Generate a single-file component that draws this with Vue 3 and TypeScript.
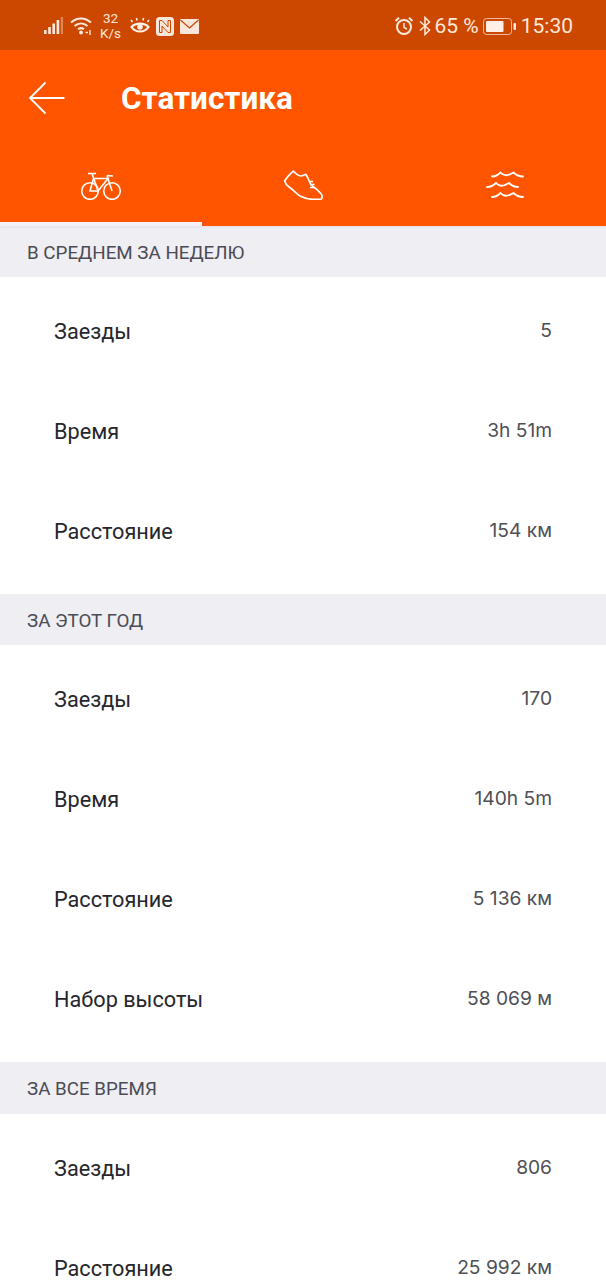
<script setup lang="ts">
interface Row { label: string; value: string }
interface Section { title: string; rows: Row[] }
const sections: Section[] = [
  { title: 'В СРЕДНЕМ ЗА НЕДЕЛЮ', rows: [
    { label: 'Заезды', value: '5' },
    { label: 'Время', value: '3h 51m' },
    { label: 'Расстояние', value: '154 км' },
  ] },
  { title: 'ЗА ЭТОТ ГОД', rows: [
    { label: 'Заезды', value: '170' },
    { label: 'Время', value: '140h 5m' },
    { label: 'Расстояние', value: '5 136 км' },
    { label: 'Набор высоты', value: '58 069 м' },
  ] },
  { title: 'ЗА ВСЕ ВРЕМЯ', rows: [
    { label: 'Заезды', value: '806' },
    { label: 'Расстояние', value: '25 992 км' },
  ] },
]
</script>

<template>
  <div class="page">
    <div class="status">
      <div class="status-left">
        <svg width="20" height="18" viewBox="0 0 20 18" class="signal">
          <rect x="0" y="13" width="2.6" height="4" fill="#ffe9dc" />
          <rect x="4.2" y="10" width="2.6" height="7" fill="#ffe9dc" />
          <rect x="8.4" y="6.5" width="2.6" height="10.5" fill="#ffe9dc" />
          <rect x="12.6" y="3" width="2.6" height="14" fill="#ffe9dc" />
          <rect x="16.8" y="0" width="2.2" height="17" fill="#ffe9dc" opacity="0.4" />
        </svg>
        <svg width="24" height="20" viewBox="0 0 24 20" class="wifi" fill="none" stroke="#ffe9dc" stroke-width="2">
          <path d="M1 6.5C7 1 15 1 21 6.5" />
          <path d="M4.5 10C8.5 6.5 13.5 6.5 17.5 10" />
          <path d="M8 13.3C10 11.7 12 11.7 14 13.3" />
          <circle cx="11" cy="16.5" r="2" fill="#ffe9dc" stroke="none" />
          <path d="M15.500 16.500h2.500M20 14v5" stroke-width="1.4" />
        </svg>
        <div class="speed"><span>32</span><span>K/s</span></div>
        <svg width="20" height="18" viewBox="0 0 20 18" class="eye" fill="none" stroke="#fff0e6" stroke-width="2.200">
          <path d="M1.500 10C5.500 5.500 14.500 5.500 18.500 10C14.500 16 5.500 16 1.500 10Z" />
          <circle cx="10" cy="10" r="2.800" fill="#fff0e6" stroke="none" />
          <path d="M2.500 5L1 3M7 3.500L6.500 1M13 3.500L13.500 1M17.500 5L19 3" stroke-width="1.600" />
        </svg>
        <svg width="18" height="19" viewBox="0 0 18 19" class="nfc">
          <rect x="0" y="0" width="18" height="19" rx="3.500" fill="#fbe6db" />
          <path d="M3.500 3.500H6L12 10V3.500H14.500V15.500H12L6 9V15.500H3.500Z" fill="none" stroke="#cc4700" stroke-width="1" />
        </svg>
        <svg width="19" height="15" viewBox="0 0 19 15" class="mail">
          <rect width="19" height="15" rx="1" fill="#fbe6db" />
          <path d="M0.500 1L9.500 9L18.500 1" fill="none" stroke="#cc4700" stroke-width="1.200" />
        </svg>
      </div>
      <div class="status-right">
        <svg width="20" height="20" viewBox="0 0 20 20" fill="none" stroke="#ffe9dc" stroke-width="2">
          <circle cx="10" cy="11" r="7" />
          <path d="M10 7v4.500l3 1.500" stroke-width="1.500" />
          <path d="M1.500 5L5 1.800M18.500 5L15 1.800" />
        </svg>
        <svg width="12" height="20" viewBox="0 0 12 20" class="bt" fill="none" stroke="#ffe9dc" stroke-width="1.500">
          <path d="M1 5.500L10.500 14L6 18.500V1.500L10.500 6L1 14.500" />
        </svg>
        <span class="pct">65 %</span>
        <svg width="33" height="17" viewBox="0 0 33 17" class="batt">
          <rect x="0.500" y="0.500" width="28" height="16" rx="3" fill="none" stroke="#ffe9dc" stroke-opacity="0.7" />
          <rect x="3" y="3" width="17.500" height="11" rx="1" fill="#fff0e6" />
          <rect x="30.500" y="5" width="2.500" height="7" rx="1" fill="#ffe9dc" />
        </svg>
        <span class="time">15:30</span>
      </div>
    </div>

    <header class="appbar">
      <div class="titlebar">
        <svg class="back" width="38" height="34" viewBox="0 0 38 34" fill="none" stroke="#fff" stroke-width="1.800">
          <path d="M36.500 17H2M17.500 1.500L2 17L17.500 32.500" />
        </svg>
        <h1 class="title">Статистика</h1>
      </div>
      <nav class="tabs">
        <div class="tab active">
          <svg width="42" height="30" viewBox="0 0 42 30" fill="none" stroke="#fff" stroke-width="1.600">
            <circle cx="10" cy="21" r="8.300" />
            <circle cx="32" cy="21" r="8.300" />
            <path d="M8 3.500H16M12 3.500L18 21H10L13.500 8.500H28L18 21M27 5.500L32 21M27 5.500L33 6" />
          </svg>
        </div>
        <div class="tab">
          <svg width="40" height="30" viewBox="0 0 40 30" fill="none" stroke="#fff" stroke-width="1.700" stroke-linejoin="round">
            <path d="M10.300 1C7 4.500 3.500 7.500 1.700 11C3 15.500 5 16 7 17.700C10.500 20 13.500 24 17 26C22 28.500 26 29.300 30.300 29.300C34 29.300 38.500 29.500 38.700 28.700C39.700 26 39.500 24.500 33.700 19.300C30.500 17 27 14.500 27 12.700C25.500 9 24.500 7 23 4.300L18.700 6C16.500 6.200 13 4 10.300 1Z" />
            <path d="M26 11.500H30M27 14.500H31.500M27 17.500H31" stroke-width="1.400" />
          </svg>
        </div>
        <div class="tab">
          <svg width="38" height="30" viewBox="0 0 38 30" fill="none" stroke="#fff" stroke-width="1.800" stroke-linecap="round">
            <path d="M6 6.500C10 6.500 12 5 14.500 2.500C17 5.500 20 5.500 22 5C24 4.500 25.500 3.500 27.500 2.500C30 5 33 6.500 37 6.500" />
            <path d="M1 17C5 17 7.500 15.500 10 13C12.500 16 15.500 16 17.500 15.500C19.500 15 21 14 23 13C25.500 15.500 28.500 17 32 17" />
            <path d="M6 27C10 27 12 25.500 14.500 23C17 26 20 26 22 25.500C24 25 25.500 24 27.500 23C30 25.500 33 27 37 27" />
          </svg>
        </div>
      </nav>
    </header>

    <main>
      <section v-for="section in sections" :key="section.title">
        <h2 class="section-title">{{ section.title }}</h2>
        <div class="rows">
          <div v-for="row in section.rows" :key="row.label" class="row">
            <span class="label">{{ row.label }}</span>
            <span class="value">{{ row.value }}</span>
          </div>
        </div>
      </section>
    </main>
  </div>
</template>

<style>
html, body { margin: 0; background: #fff; }
</style>

<style scoped>
.page {
  width: 606px;
  height: 1280px;
  overflow: hidden;
  background: #fff;
  font-family: Roboto, "Liberation Sans", sans-serif;
}
.status {
  box-sizing: border-box;
  height: 50px;
  background: #cc4700;
  color: #ffe9dc;
  display: flex;
  justify-content: space-between;
  align-items: center;
  padding: 2px 33px 0 44px;
}
.status-left, .status-right { display: flex; align-items: center; }
.wifi { margin-left: 6px; }
.speed {
  display: flex;
  flex-direction: column;
  align-items: center;
  margin-left: 6px;
  font-size: 13.500px;
  line-height: 15px;
}
.eye { margin-left: 9px; }
.nfc { margin-left: 6px; }
.mail { margin-left: 6px; margin-top: 1px; }
.bt { margin-left: 5px; }
.pct { font-size: 21px; margin-left: 4px; }
.batt { margin-left: 4px; }
.time { font-size: 21px; margin-left: 5px; }
.appbar { background: #ff5500; height: 176px; }
.titlebar {
  height: 96px;
  display: flex;
  align-items: center;
  padding-left: 28px;
}
.back { margin-top: -1px; }
.title {
  margin: 0 0 0 55px;
  color: #fff;
  font-size: 31.500px;
  font-weight: 700;
}
.tabs { display: flex; height: 80px; }
.tab {
  width: 202px;
  height: 76px;
  display: flex;
  justify-content: center;
  align-items: center;
  padding-bottom: 4px;
}
.tab svg { margin-top: 2px; }
.tab.active { border-bottom: 4px solid #f2f2f6; padding-bottom: 0; }
.section-title {
  margin: 0;
  height: 51px;
  line-height: 54px;
  padding-left: 27px;
  background: #eeeef3;
  color: #4b4b55;
  font-size: 18.800px;
  font-weight: 400;
}
section:first-child .section-title {
  box-shadow: inset 0 3px 3px -2px rgba(0, 0, 0, 0.06);
}
section:last-child .section-title { height: 52px; }
.rows { padding: 4px 0 13px; background: #fff; }
.row {
  height: 100px;
  display: flex;
  justify-content: space-between;
  align-items: center;
  padding: 0 54px;
}
.label { font-size: 21.700px; color: #26262c; }
.value {
  font-family: Inter, Roboto, sans-serif;
  font-size: 19.200px;
  color: #4f4f56;
  margin-top: -2px;
}
</style>
